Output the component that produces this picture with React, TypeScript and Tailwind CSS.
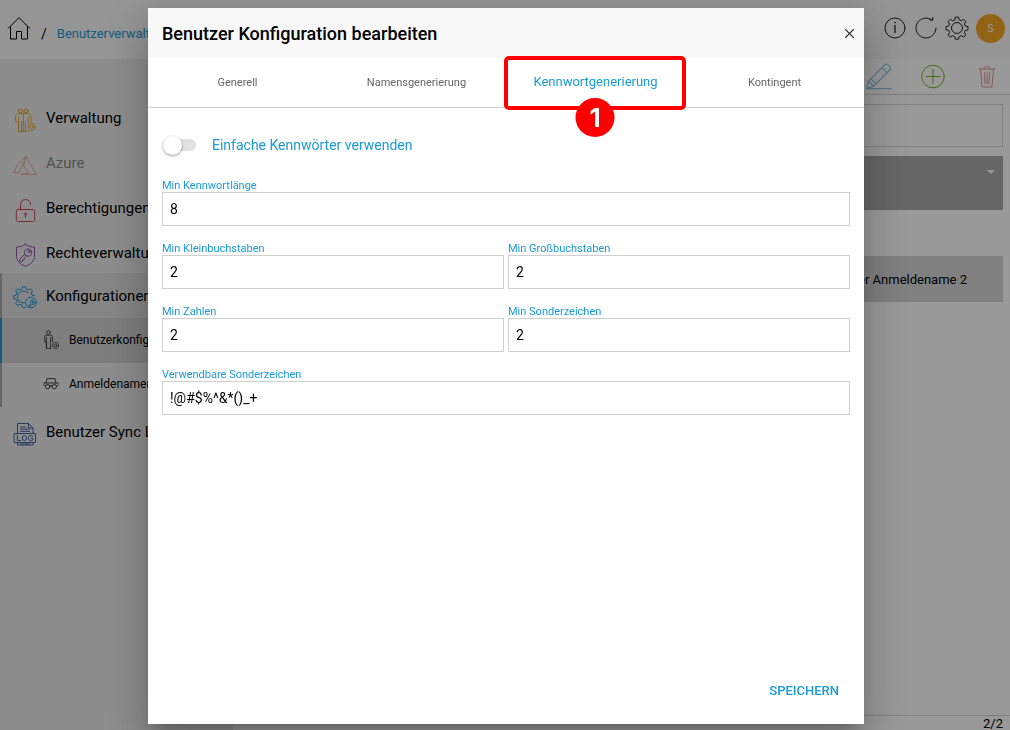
import { useState } from 'react'
import type { ReactNode } from 'react'

/* ---------- Icons ---------- */

interface IconProps {
  className?: string
  children: ReactNode
}

function Icon({ className = 'size-6', children }: IconProps) {
  return (
    <svg
      viewBox="0 0 24 24"
      fill="none"
      stroke="currentColor"
      strokeWidth="1"
      strokeLinecap="round"
      strokeLinejoin="round"
      className={`shrink-0 ${className}`}
      aria-hidden="true"
    >
      {children}
    </svg>
  )
}

const GEAR =
  'M10.4 1.2h3.2l.6 2.7 2.1.9 2.4-1.5 2.2 2.2-1.5 2.4.9 2.1 2.7.6v3.2l-2.7.6-.9 2.1 1.5 2.4-2.2 2.2-2.4-1.5-2.1.9-.6 2.7h-3.2l-.6-2.7-2.1-.9-2.4 1.5-2.2-2.2 1.5-2.4-.9-2.1-2.7-.6v-3.2l2.7-.6.9-2.1-1.5-2.4 2.2-2.2 2.4 1.5 2.1-.9z'

const HomeIcon = () => (
  <Icon className="size-6">
    <path d="M1.5 12.2 12 1.6l10.500 10.600M3.500 10.500V23h6v-7.500h5V23h6V10.500" />
  </Icon>
)

const UsersIcon = () => (
  <Icon className="size-6 text-[#e0a030]">
    <circle cx="7.500" cy="3" r="2" />
    <circle cx="13" cy="3" r="2" />
    <path
      d="M5.500 23.300V14H4.200c-1 0-1.600-.5-1.600-1.500V8.500c0-1.900 1-2.900 2.900-2.900h9.500c1.900 0 2.900 1 2.900 2.900v6M5.500 9v14.300h10M8.500 14v9M10.300 6v17M12.300 14v9M15.200 9v6"
      strokeWidth=".9"
    />
    <circle cx="18.500" cy="19" r="3.500" strokeDasharray="1.700 .7" />
    <circle cx="18.500" cy="19" r="1.500" strokeWidth=".8" />
  </Icon>
)

const AzureIcon = () => (
  <Icon className="size-6 text-[#ddb095]">
    <path d="M13 3.500 4.500 11.500 1 19.500h5L13 3.500l10.300 18H7.500l8.500-1.500-5.500-7L13 3.500" />
  </Icon>
)

const LockIcon = () => (
  <Icon className="size-6 text-[#c9405a]">
    <path d="M7.500 11.500V6.500c0-6.600 10-6.600 10 0V7M4.500 11.500h16c.8 0 1.200.4 1.200 1.200v8.600c0 1.500-.6 2.200-2.200 2.200h-14c-1.600 0-2.200-.7-2.200-2.200v-8.600c0-.8.4-1.200 1.200-1.200z" />
    <circle cx="12.500" cy="16" r="1" />
    <path d="M12.500 17v2.500" />
  </Icon>
)

const KeyIcon = () => (
  <Icon className="size-6 text-[#8d55b0]">
    <path d="M12.500 1.200c2.800 2.100 5.800 2.800 9 2.800v9c0 5-3.500 8.300-9 10.300-5.500-2-9-5.300-9-10.300V4c3.200 0 6.200-.7 9-2.800z" />
    <circle cx="15" cy="9.500" r="3.700" />
    <circle cx="16" cy="8.500" r="1" />
    <path d="m11.700 11.200-4.900 5v2.500h2.500l.2-2h1.700l.2-1.700 1.700-1.500" />
  </Icon>
)

const ConfigIcon = () => (
  <Icon className="size-6 text-[#1a9bd7]">
    <path d="M13 21.500h-3.500L9 19l-2-.8-2.300 1.400-2-2.200 1.300-2.200-.8-2L.7 12.500V9.700l2.500-.7.800-2-1.300-2.200L4.800 2.700 7 4l2-.8L9.700.8h3l.6 2.400 2 .8 2.200-1.300 2.100 2.100L18.200 7l.8 2 2.500.6" />
    <path d="M14.500 6.500A6 6 0 1 0 11.500 17" />
    <circle cx="18" cy="16.500" r="5.300" />
    <path d="m15.200 20.300 2.500-3c-1-2 .8-4 2.600-3.200L18.900 16l1 .8 1.700-1.300c.5 2-1 3.200-2.700 2.700l-2.500 3" />
  </Icon>
)

const LogIcon = () => (
  <Icon className="size-6 text-[#4560a8]">
    <path d="M4.500 11.500V1.500h11l4.500 4.500v5.500M15.500 1.500V6H20M7.500 5h5M7.500 7.200h9M7.500 9.400h9M4.500 20.500V23H20v-2.500M7.500 22h9" />
    <rect x="1.500" y="11.500" width="21" height="9" />
    <path d="M4.500 13.500v5h3M19.800 14.300c-3-1.700-4.500 0-4.500 1.700 0 2.500 2.500 3 4.500 2v-1.700h-1.500" />
    <ellipse cx="11.500" cy="16" rx="2.200" ry="2.500" />
  </Icon>
)

const PersonGearIcon = () => (
  <Icon className="size-5 text-[#333]">
    <circle cx="9" cy="3" r="2.200" />
    <path d="M6.500 22V14H4.500V8.500c0-1.600.7-2.300 2.300-2.300h4.700c1.600 0 2.300.7 2.300 2.300V14M6.500 9v13h5M11.500 9v13" />
    <circle cx="17.500" cy="18.500" r="3.700" strokeDasharray="1.800 .8" />
    <circle cx="17.500" cy="18.500" r="1.500" />
  </Icon>
)

const IncognitoIcon = () => (
  <Icon className="size-4 text-[#333]">
    <path d="M1 10.500h22M4.500 10.500 6 4h12l1.500 6.500" strokeWidth="1.400" />
    <circle cx="7" cy="16" r="3.300" strokeWidth="1.400" />
    <circle cx="17" cy="16" r="3.300" strokeWidth="1.400" />
    <path d="M10 15c1.300-1 2.700-1 4 0M3.500 15 1 13.500M20.500 15l2.500-1.500" strokeWidth="1.400" />
  </Icon>
)

const InfoIcon = () => (
  <Icon className="size-6 text-[#222]">
    <circle cx="12" cy="12" r="10" />
    <path d="M12 9.500v7" strokeWidth="1.300" />
    <circle cx="12" cy="6.500" r=".4" fill="currentColor" />
  </Icon>
)

const RefreshIcon = () => (
  <Icon className="size-6 text-[#222]">
    <path d="M22 12A10 10 0 1 1 18 4M15.500 3.700l3 .7.400-3" />
  </Icon>
)

const SettingsIcon = () => (
  <Icon className="size-6 text-[#222]">
    <path d={GEAR} />
    <circle cx="12" cy="12" r="5.500" />
  </Icon>
)

const EditIcon = () => (
  <Icon className="size-7 text-[#90c8e4]">
    <path d="M1.200 22 3 15.500 17 1.500c1.500-2 6 2 4.500 4.300L7.500 19.800zM3 15.500l4.500 4.300M5 13.500l4.500 4.300M14.500 4l4.500 4.300M1.200 22H22.500" />
  </Icon>
)

const AddIcon = () => (
  <Icon className="size-6 text-[#78b41c]">
    <circle cx="12" cy="11.500" r="11.300" />
    <path d="M12 4.500v14M5 11.500h14" />
  </Icon>
)

const TrashIcon = () => (
  <Icon className="size-6 text-[#dd9a9a]">
    <path d="M4 4h16M9 4c0-3.500 6-3.500 6 0M5.500 4 7 22h10l1.500-18M9.500 7.500l.5 11M12 7.500v11M14.500 7.500l-.5 11" />
  </Icon>
)

/* ---------- Background page ---------- */

interface NavItem {
  label: string
  icon: ReactNode
  disabled?: boolean
}

const topItems: NavItem[] = [
  { label: 'Verwaltung', icon: <UsersIcon /> },
  { label: 'Azure', icon: <AzureIcon />, disabled: true },
  { label: 'Berechtigungen', icon: <LockIcon /> },
  { label: 'Rechteverwaltung', icon: <KeyIcon /> },
]

function NavLink({ label, icon, disabled }: NavItem) {
  return (
    <a
      href="#"
      className={`flex h-[45px] items-center gap-[9px] pl-[13px] pt-0.5 text-[15px] ${disabled ? 'text-[#888]' : ''}`}
    >
      <span className="pt-0.5">{icon}</span>
      {label}
    </a>
  )
}

function Header() {
  return (
    <header className="flex h-[59px] shrink-0 items-center justify-between bg-[#f8f8f8] pb-[3px] pl-[7px] pr-[5px]">
      <nav aria-label="Breadcrumb" className="flex items-center">
        <a href="#" aria-label="Start">
          <HomeIcon />
        </a>
        <span className="px-2.5 pt-3 text-[14px]">/</span>
        <a href="#" className="pt-3 text-[13px] text-[#1a9bd7]">
          Benutzerverwaltung
        </a>
      </nav>
      <div className="flex items-center gap-[7px]">
        <button type="button" aria-label="Info">
          <InfoIcon />
        </button>
        <button type="button" aria-label="Aktualisieren">
          <RefreshIcon />
        </button>
        <button type="button" aria-label="Einstellungen">
          <SettingsIcon />
        </button>
        <button type="button" className="size-[29px] rounded-full bg-[#f5a623] text-[10px] text-white">
          S
        </button>
      </div>
    </header>
  )
}

function Sidebar() {
  return (
    <aside className="w-[233px] shrink-0 bg-[#ebebeb] pt-9">
      <nav aria-label="Navigation">
        {topItems.map((item) => (
          <NavLink key={item.label} {...item} />
        ))}
        <div className="-mt-0.5">
          <div className="border-l-2 border-[#aaa] bg-[#dfdfdf] [&>a]:pl-[11px]">
            <NavLink label="Konfigurationen" icon={<ConfigIcon />} />
          </div>
          <a
            href="#"
            className="flex h-[45px] items-center gap-2 border-l-2 border-[#1a9bd7] bg-[#d2d2d2] pb-0.5 pl-[39px] text-[12px]"
          >
            <PersonGearIcon />
            Benutzerkonfiguration
          </a>
          <a
            href="#"
            className="flex h-11 items-center gap-2.5 border-l-2 border-[#aaa] pb-0.5 pl-[41px] text-[12px]"
          >
            <IncognitoIcon />
            Anmeldenamen
          </a>
        </div>
        <div className="pt-0.5">
          <NavLink label="Benutzer Sync Log" icon={<LogIcon />} />
        </div>
      </nav>
    </aside>
  )
}

function ListPage() {
  return (
    <main className="flex min-w-0 flex-1 flex-col bg-white">
      <div className="flex h-9 items-center justify-end gap-7 border-b border-[#d5d5d5] pr-[11px]">
        <button type="button" aria-label="Bearbeiten">
          <EditIcon />
        </button>
        <button type="button" aria-label="Hinzufügen">
          <AddIcon />
        </button>
        <button type="button" aria-label="Löschen" className="pl-0.5">
          <TrashIcon />
        </button>
      </div>
      <div className="flex flex-1 flex-col px-[7px] pt-[9px]">
        <input
          type="text"
          aria-label="Suche"
          className="h-[43px] w-full border border-[#d5d5d5] outline-none"
        />
        <div className="mt-[9px] flex h-[54px] justify-end bg-[#aaa] pr-2 pt-3.5">
          <svg viewBox="0 0 8 4" className="h-1 w-2 text-white" aria-hidden="true">
            <path d="M0 0h8L4 4z" fill="currentColor" />
          </svg>
        </div>
        <div className="mt-[46px] flex h-[46px] items-center justify-end bg-[#d5d5d5] pr-9 pt-0.5 text-[13px]">
          Benutzer Anmeldename 2
        </div>
      </div>
      <footer className="flex h-[15px] items-center justify-end border-t border-[#d5d5d5] pr-[7px] pt-0.5 text-[13px]">
        2/2
      </footer>
    </main>
  )
}

/* ---------- Dialog ---------- */

const tabs = ['Generell', 'Namensgenerierung', 'Kennwortgenerierung', 'Kontingent']

interface FieldProps {
  id: string
  label: string
  value: string
  wide?: boolean
}

const fields: FieldProps[] = [
  { id: 'min-length', label: 'Min Kennwortlänge', value: '8', wide: true },
  { id: 'min-lower', label: 'Min Kleinbuchstaben', value: '2' },
  { id: 'min-upper', label: 'Min Großbuchstaben', value: '2' },
  { id: 'min-digits', label: 'Min Zahlen', value: '2' },
  { id: 'min-special', label: 'Min Sonderzeichen', value: '2' },
  { id: 'special-chars', label: 'Verwendbare Sonderzeichen', value: '!@#$%^&*()_+', wide: true },
]

function Field({ id, label, value, wide }: FieldProps) {
  return (
    <div className={`flex flex-col ${wide ? 'col-span-2' : ''}`}>
      <label htmlFor={id} className="text-[11px] leading-[13px] text-[#1a9bd7]">
        {label}
      </label>
      <input
        id={id}
        type="text"
        defaultValue={value}
        className="h-[34px] w-full border border-[#d0d0d0] px-[7px] text-[14px] text-black outline-none focus:border-[#1a9bd7]"
      />
    </div>
  )
}

function ConfigDialog() {
  const [active, setActive] = useState('Kennwortgenerierung')
  const [simple, setSimple] = useState(false)

  return (
    <div
      role="dialog"
      aria-modal="true"
      aria-labelledby="dialog-title"
      className="flex flex-1 flex-col bg-white shadow-[0_11px_15px_-7px_rgba(0,0,0,0.2),0_24px_38px_3px_rgba(0,0,0,0.14),0_9px_46px_8px_rgba(0,0,0,0.12)]"
    >
      <div className="flex h-[50px] shrink-0 items-center justify-between bg-[#f8f8f8] pl-3.5 pr-[7px]">
        <h1 id="dialog-title" className="text-[18px] font-medium">
          Benutzer Konfiguration bearbeiten
        </h1>
        <button type="button" aria-label="Schließen" className="p-0.5">
          <svg viewBox="0 0 9 9" className="m-px size-[9px]" stroke="#222" strokeWidth="1.200" aria-hidden="true">
            <path d="M0 0l9 9M9 0 0 9" />
          </svg>
        </button>
      </div>

      <div role="tablist" className="grid h-[50px] shrink-0 grid-cols-4 border-b border-[#d0d0d0]">
        {tabs.map((tab) => (
          <div key={tab} className="relative flex">
            <button
              type="button"
              role="tab"
              aria-selected={tab === active}
              onClick={() => setActive(tab)}
              className={`flex-1 ${tab === active ? 'pb-0.5 text-[13px] text-[#1a9bd7]' : 'pt-0.5 text-[11px] text-[#666]'}`}
            >
              {tab}
            </button>
            {/* Step marker */}
            {tab === 'Kennwortgenerierung' && (
              <div className="pointer-events-none absolute -bottom-[3px] -left-0.5 -right-px -top-0.5 rounded-[5px] border-4 border-[#f00]">
                <span className="absolute left-1/2 top-[38px] flex size-[39px] -translate-x-1/2 items-center justify-center rounded-full bg-[#f00] font-[Inter,sans-serif] text-[26px] font-bold text-white">
                  1
                </span>
              </div>
            )}
          </div>
        ))}
      </div>

      <form id="password-form" className="flex-1 px-3.5 pt-[27px]">
        <label className="flex h-5 items-center text-[14px] text-[#1a9bd7]">
          <input
            type="checkbox"
            role="switch"
            checked={simple}
            onChange={(e) => setSimple(e.target.checked)}
            className="mr-4 flex h-3 w-[34px] appearance-none items-center rounded-full bg-[#e0e0e0] bg-clip-content pl-0.5 before:-ml-px before:size-[19px] before:shrink-0 before:rounded-full before:bg-white before:shadow-[0_1px_3px_rgba(0,0,0,0.4)] checked:before:ml-3.5"
          />
          Einfache Kennwörter verwenden
        </label>
        <div className="mt-6 grid grid-cols-2 gap-x-1 gap-y-4">
          {fields.map((field) => (
            <Field key={field.id} {...field} />
          ))}
        </div>
      </form>

      <div className="flex justify-end px-[25px] pb-[23px]">
        <button type="submit" form="password-form" className="text-[13px] font-medium leading-5 text-[#1a9bd7]">
          SPEICHERN
        </button>
      </div>
    </div>
  )
}

export default function App() {
  return (
    <div className="font-[Roboto,'Liberation_Sans',sans-serif] text-black">
      <div className="flex h-screen flex-col overflow-hidden">
        <Header />
        <div className="flex min-h-0 flex-1">
          <Sidebar />
          <ListPage />
        </div>
      </div>
      <div className="fixed inset-0 flex overflow-hidden bg-black/40 pb-1.5 pl-37 pr-[146px] pt-2">
        <ConfigDialog />
      </div>
    </div>
  )
}
